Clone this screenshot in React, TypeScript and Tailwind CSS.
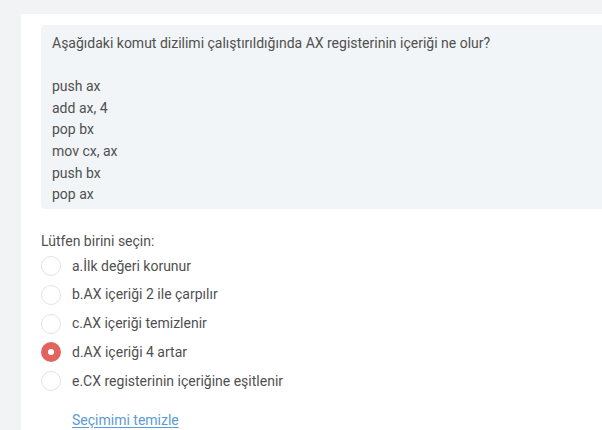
import React from "react";

const options = [
  { label: "a.İlk değeri korunur", checked: false },
  { label: "b.AX içeriği 2 ile çarpılır", checked: false },
  { label: "c.AX içeriği temizlenir", checked: false },
  { label: "d.AX içeriği 4 artar", checked: true },
  { label: "e.CX registerinin içeriğine eşitlenir", checked: false },
];

export default function App() {
  return (
    <div
      className="min-h-[430px] w-[602px] overflow-hidden bg-[#f2f3f5] pl-[21px] pt-[14px] text-[14px] text-[#505050]"
      style={{ fontFamily: "Roboto, 'Liberation Sans', sans-serif" }}
    >
      <div className="min-h-[416px] bg-white pl-[20px] pt-[11px]">
        <div className="rounded-l-[4px] bg-[#f2f5f7] pb-[3px] pl-[11px] pt-[8px] leading-[21.6px]">
          <p>Aşağıdaki komut dizilimi çalıştırıldığında AX registerinin içeriği ne olur?</p>
          <p>&nbsp;</p>
          <p>push ax</p>
          <p>add ax, 4</p>
          <p>pop bx</p>
          <p>mov cx, ax</p>
          <p>push bx</p>
          <p>pop ax</p>
        </div>
        <div className="mt-[22px] leading-[21px]">Lütfen birini seçin:</div>
        <div className="flex flex-col">
          {options.map((o) => (
            <div key={o.label} className="flex h-[28.75px] items-center">
              {o.checked ? (
                <span className="flex h-[20px] w-[20px] items-center justify-center rounded-full bg-[#e2645e]">
                  <span className="h-[6px] w-[6px] rounded-full bg-white" />
                </span>
              ) : (
                <span className="h-[20px] w-[20px] rounded-full border border-[#e3e3e3] bg-white" />
              )}
              <span className="ml-[11px]">{o.label}</span>
            </div>
          ))}
        </div>
        <div className="mt-[14px] pl-[31px]">
          <a href="#" className="text-[#5b9bd5] underline underline-offset-2">
            Seçimimi temizle
          </a>
        </div>
      </div>
    </div>
  );
}
